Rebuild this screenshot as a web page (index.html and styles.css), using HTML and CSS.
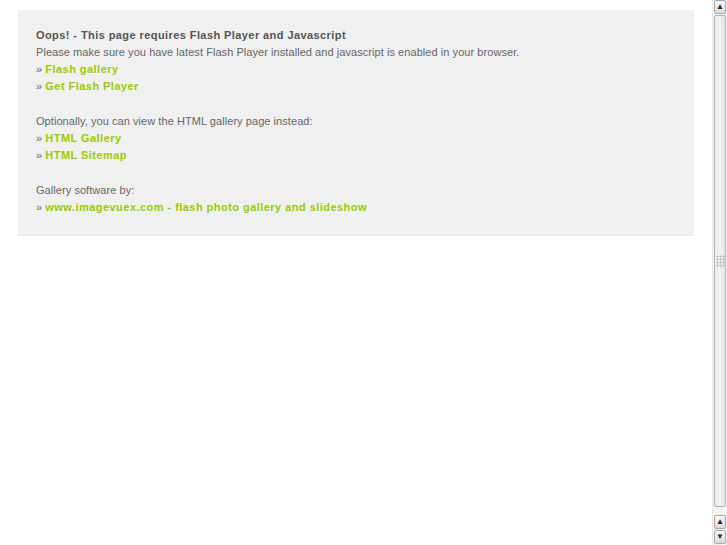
FILE: index.html
```html
<!DOCTYPE html>
<html lang="en">
<head>
    <meta charset="UTF-8">
    <title>Gallery</title>
    <link rel="stylesheet" href="styles.css">
</head>
<body>
    <div class="notice">
        <p class="title">Oops! - This page requires Flash Player and Javascript</p>
        <p>Please make sure you have latest Flash Player installed and javascript is enabled in your browser.<br>
        &raquo; <a href="#">Flash gallery</a><br>
        &raquo; <a href="#">Get Flash Player</a></p>

        <p>Optionally, you can view the HTML gallery page instead:<br>
        &raquo; <a href="#">HTML Gallery</a><br>
        &raquo; <a href="#">HTML Sitemap</a></p>

        <p>Gallery software by:<br>
        &raquo; <a href="#">www.imagevuex.com - flash photo gallery and slideshow</a></p>
    </div>

    <!-- window scrollbar as it shows in the screenshot -->
    <div class="scrollbar">
        <div class="sb-btn">&#9650;</div>
        <div class="sb-thumb"><span class="grip"></span></div>
        <div class="sb-track"></div>
        <div class="sb-btn">&#9650;</div>
        <div class="sb-btn">&#9660;</div>
    </div>
</body>
</html>
```

FILE: styles.css
```css
body {
    margin: 10px 33px 10px 18px;
    background: #ffffff;
    font-family: "Liberation Sans", Arial, sans-serif;
    font-size: 11px;
    line-height: 17px;
    letter-spacing: 0.06px;
    color: #666666;
}
.notice {
    background: #f0f0f0;
    padding: 17px 18px 19px 18px;
    border-bottom: 1px dotted #e2e2e2;
}
.notice p {
    margin: 0 0 18px 0;
}
.notice p:last-child {
    margin-bottom: 0;
}
.notice .title {
    margin: 0;
    font-weight: bold;
    letter-spacing: 0.42px;
    color: #555555;
}
a {
    color: #99cc00;
    font-weight: bold;
    letter-spacing: 0.46px;
    text-decoration: none;
}
.scrollbar {
    position: fixed;
    top: 0;
    right: 0;
    width: 15px;
    height: 545px;
    display: flex;
    flex-direction: column;
    background: #f4f4f4;
    border-left: 1px solid #e8e8e8;
    box-sizing: border-box;
}
.sb-btn {
    height: 14px;
    flex: none;
    margin: 0 1px 1px 1px;
    border: 1px solid #a8a8a8;
    border-radius: 2px;
    background: linear-gradient(#f6f6f6, #dcdcdc);
    box-sizing: border-box;
    font-size: 8px;
    line-height: 12px;
    text-align: center;
    color: #222222;
}
.sb-thumb {
    flex: 1;
    margin: 0 1px;
    border: 1px solid #b4b4b4;
    border-radius: 2px;
    background: linear-gradient(90deg, #ececec, #f2f2f2 50%, #e2e2e2);
    display: flex;
    align-items: center;
    justify-content: center;
}
.grip {
    width: 9px;
    height: 13px;
    background-image: radial-gradient(#b8b8b8 45%, transparent 50%);
    background-size: 3px 3px;
}
.sb-track {
    height: 8px;
    flex: none;
}
```
